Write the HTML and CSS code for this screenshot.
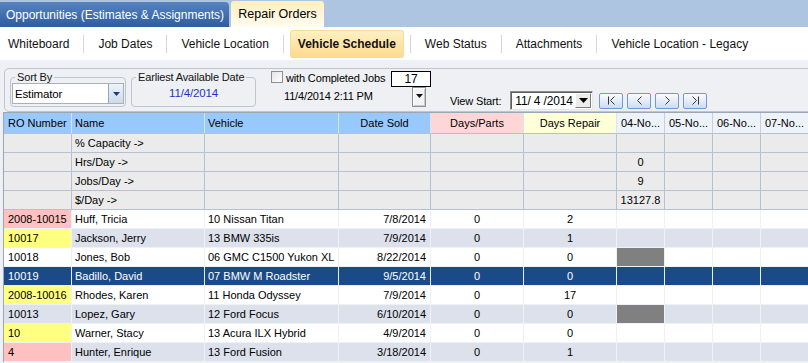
FILE: index.html
```html
<!DOCTYPE html>
<html lang="en">
<head>
  <meta charset="UTF-8">
  <title>Repair Orders - Vehicle Schedule</title>
  <link rel="stylesheet" href="styles.css">
</head>
<body>
  <header class="tabbar">
    <a class="tab tab-opps">Opportunities (Estimates &amp; Assignments)</a>
    <a class="tab tab-repair">Repair Orders</a>
  </header>

  <nav class="subnav">
    <a>Whiteboard</a><span class="sep"></span>
    <a>Job Dates</a><span class="sep"></span>
    <a>Vehicle Location</a><span class="sep"></span>
    <a class="active">Vehicle Schedule</a><span class="sep"></span>
    <a>Web Status</a><span class="sep"></span>
    <a>Attachments</a><span class="sep"></span>
    <a>Vehicle Location - Legacy</a>
  </nav>

  <section class="toolbar">
    <div class="toolbar-group">
      <fieldset class="box box-sort">
        <legend>Sort By</legend>
        <div class="combo">
          <span class="combo-text">Estimator</span>
          <span class="combo-btn">
            <svg width="7" height="4" viewBox="0 0 7 4"><path d="M0 0h7L3.5 4z" fill="#1f3f73"/></svg>
          </span>
        </div>
      </fieldset>

      <fieldset class="box box-earliest">
        <legend>Earliest Available Date</legend>
        <div class="earliest-date">11/4/2014</div>
      </fieldset>

      <div class="completed">
        <div class="completed-top">
          <span class="checkbox"></span>
          <span class="completed-label">with Completed Jobs</span>
          <span class="count-input">17</span>
        </div>
        <div class="completed-bottom">
          <span class="stamp">11/4/2014 2:11 PM</span>
          <span class="mini-drop">
            <svg width="7" height="4" viewBox="0 0 7 4"><path d="M0 0h7L3.5 4z" fill="#111"/></svg>
          </span>
        </div>
      </div>

      <div class="view-start">
        <span class="view-label">View Start:</span>
        <div class="date-picker">
          <span class="picker-text">11/ 4 /2014</span>
          <span class="picker-btn">
            <svg width="9" height="5" viewBox="0 0 9 5"><path d="M0 0h9L4.5 5z" fill="#000"/></svg>
          </span>
        </div>
        <div class="nav-buttons">
          <button class="nav-btn"><svg width="9" height="9" viewBox="0 0 9 9"><path d="M1.5 0.5v8M7.5 0.5L3.5 4.5L7.5 8.5" stroke="#333" fill="none"/></svg></button>
          <button class="nav-btn"><svg width="9" height="9" viewBox="0 0 9 9"><path d="M6.5 0.5L2.5 4.5L6.5 8.5" stroke="#333" fill="none"/></svg></button>
          <button class="nav-btn"><svg width="9" height="9" viewBox="0 0 9 9"><path d="M2.5 0.5L6.5 4.5L2.5 8.5" stroke="#333" fill="none"/></svg></button>
          <button class="nav-btn"><svg width="9" height="9" viewBox="0 0 9 9"><path d="M1.5 0.5L5.5 4.5L1.5 8.5M7.5 0.5v8" stroke="#333" fill="none"/></svg></button>
        </div>
      </div>
    </div>
  </section>

  <div class="grid">
    <div class="grid-row grid-head">
      <div class="cell">RO Number</div>
      <div class="cell">Name</div>
      <div class="cell">Vehicle</div>
      <div class="cell center">Date Sold</div>
      <div class="cell center head-parts">Days/Parts</div>
      <div class="cell center head-repair">Days Repair</div>
      <div class="cell center head-day">04-No...</div>
      <div class="cell center head-day">05-No...</div>
      <div class="cell center head-day">06-No...</div>
      <div class="cell center head-day">07-No...</div>
    </div>

    <div class="grid-row capacity">
      <div class="cell"></div><div class="cell">% Capacity -&gt;</div><div class="cell"></div><div class="cell"></div>
      <div class="cell"></div><div class="cell"></div><div class="cell center"></div><div class="cell"></div><div class="cell"></div><div class="cell"></div>
    </div>
    <div class="grid-row capacity">
      <div class="cell"></div><div class="cell">Hrs/Day -&gt;</div><div class="cell"></div><div class="cell"></div>
      <div class="cell"></div><div class="cell"></div><div class="cell center">0</div><div class="cell"></div><div class="cell"></div><div class="cell"></div>
    </div>
    <div class="grid-row capacity">
      <div class="cell"></div><div class="cell">Jobs/Day -&gt;</div><div class="cell"></div><div class="cell"></div>
      <div class="cell"></div><div class="cell"></div><div class="cell center">9</div><div class="cell"></div><div class="cell"></div><div class="cell"></div>
    </div>
    <div class="grid-row capacity">
      <div class="cell"></div><div class="cell">$/Day -&gt;</div><div class="cell"></div><div class="cell"></div>
      <div class="cell"></div><div class="cell"></div><div class="cell center">13127.8</div><div class="cell"></div><div class="cell"></div><div class="cell"></div>
    </div>

    <div class="grid-row job">
      <div class="cell ro-pink">2008-10015</div><div class="cell">Huff, Tricia</div><div class="cell">10 Nissan Titan</div><div class="cell right">7/8/2014</div>
      <div class="cell center">0</div><div class="cell center">2</div><div class="cell"></div><div class="cell"></div><div class="cell"></div><div class="cell"></div>
    </div>
    <div class="grid-row job alt">
      <div class="cell ro-yellow">10017</div><div class="cell">Jackson, Jerry</div><div class="cell">13 BMW 335is</div><div class="cell right">7/9/2014</div>
      <div class="cell center">0</div><div class="cell center">1</div><div class="cell"></div><div class="cell"></div><div class="cell"></div><div class="cell"></div>
    </div>
    <div class="grid-row job">
      <div class="cell">10018</div><div class="cell">Jones, Bob</div><div class="cell">06 GMC C1500 Yukon XL</div><div class="cell right">8/22/2014</div>
      <div class="cell center">0</div><div class="cell center">0</div><div class="cell booked"></div><div class="cell"></div><div class="cell"></div><div class="cell"></div>
    </div>
    <div class="grid-row job selected">
      <div class="cell">10019</div><div class="cell">Badillo, David</div><div class="cell">07 BMW M Roadster</div><div class="cell right">9/5/2014</div>
      <div class="cell center">0</div><div class="cell center">0</div><div class="cell"></div><div class="cell"></div><div class="cell"></div><div class="cell"></div>
    </div>
    <div class="grid-row job">
      <div class="cell ro-yellow">2008-10016</div><div class="cell">Rhodes, Karen</div><div class="cell">11 Honda Odyssey</div><div class="cell right">7/9/2014</div>
      <div class="cell center">0</div><div class="cell center">17</div><div class="cell"></div><div class="cell"></div><div class="cell"></div><div class="cell"></div>
    </div>
    <div class="grid-row job alt">
      <div class="cell">10013</div><div class="cell">Lopez, Gary</div><div class="cell">12 Ford Focus</div><div class="cell right">6/10/2014</div>
      <div class="cell center">0</div><div class="cell center">0</div><div class="cell booked"></div><div class="cell"></div><div class="cell"></div><div class="cell"></div>
    </div>
    <div class="grid-row job">
      <div class="cell ro-yellow">10</div><div class="cell">Warner, Stacy</div><div class="cell">13 Acura ILX Hybrid</div><div class="cell right">4/9/2014</div>
      <div class="cell center">0</div><div class="cell center">0</div><div class="cell"></div><div class="cell"></div><div class="cell"></div><div class="cell"></div>
    </div>
    <div class="grid-row job alt">
      <div class="cell ro-pink">4</div><div class="cell">Hunter, Enrique</div><div class="cell">13 Ford Fusion</div><div class="cell right">3/18/2014</div>
      <div class="cell center">0</div><div class="cell center">1</div><div class="cell"></div><div class="cell"></div><div class="cell"></div><div class="cell"></div>
    </div>
  </div>
</body>
</html>
```

FILE: styles.css
```css
body {
  margin: 0;
  width: 808px;
  height: 363px;
  overflow: hidden;
  font-family: 'Liberation Sans', Arial, sans-serif;
  font-size: 12px;
  color: #000;
  background-color: #eef0f4;
}

/* top tabs */
.tabbar {
  height: 27px;
  display: flex;
  align-items: flex-end;
  background-color: #adc5e0;
}

.tab {
  display: flex;
  align-items: center;
  box-sizing: border-box;
  font-size: 12px;
  text-decoration: none;
}

.tab-opps {
  width: 229px;
  height: 25px;
  padding-left: 6px;
  color: #fff;
  background: linear-gradient(#5784c0, #2e5c9d);
  border-top-right-radius: 4px;
}

.tab-repair {
  width: 93px;
  height: 26px;
  margin-left: 2px;
  justify-content: center;
  color: #000;
  font-size: 12.5px;
  background: linear-gradient(#ffefc0, #fffcf0);
  border-radius: 3px 3px 0 0;
}

/* sub navigation */
.subnav {
  height: 33px;
  display: flex;
  align-items: center;
  background-color: #fff;
}

.subnav a {
  padding: 0 8px;
  color: #111;
  text-decoration: none;
  line-height: 28px;
}

.subnav a.active {
  font-weight: bold;
  border-radius: 4px;
  background: linear-gradient(#fff1c6, #ffd98c);
  box-shadow: inset 0 0 0 1px #f6dc96;
}

.subnav .sep {
  width: 1px;
  height: 18px;
  margin: 0 6px;
  background-color: #d6d6d6;
}

/* toolbar */
.toolbar {
  height: 52px;
  box-sizing: border-box;
  padding: 6px 0 0 4px;
  background-color: #eef0f4;
  border-top: 2px solid #edf1f8;
  font-size: 11px;
  letter-spacing: -0.15px;
}

.toolbar-group {
  height: 44px;
  box-sizing: border-box;
  margin-right: -20px;
  padding-top: 2px;
  display: flex;
  align-items: flex-start;
  border: 1px solid #bcc5d2;
  border-radius: 5px;
}

.box {
  height: 36px;
  box-sizing: border-box;
  margin: 0 0 0 5px;
  padding: 0 1px 2px;
  min-width: 0;
  border: 1px solid #bcc5d2;
  border-radius: 4px;
}

.box legend {
  margin-left: 3px;
  padding: 0 2px;
  line-height: 12px;
  font-size: 11px;
  white-space: nowrap;
  color: #111;
}

.box-sort {
  width: 116px;
}

.box-earliest {
  width: 125px;
}

.combo {
  height: 21px;
  box-sizing: border-box;
  display: flex;
  align-items: center;
  justify-content: space-between;
  background-color: #fff;
  border: 1px solid #a7b0bd;
}

.combo-text {
  padding-left: 2px;
  font-size: 11.5px;
}

.combo-btn {
  width: 15px;
  height: 19px;
  box-sizing: border-box;
  display: flex;
  align-items: center;
  justify-content: center;
  border-left: 1px solid #8ea3c2;
  background: linear-gradient(#eef3fa, #cfdbea);
}

.earliest-date {
  padding-top: 4px;
  text-align: center;
  font-size: 11.5px;
  color: #1f33cc;
}

.completed {
  width: 160px;
  margin-left: 15px;
}

.completed-top {
  height: 16px;
  display: flex;
  align-items: center;
}

.checkbox {
  width: 12px;
  height: 12px;
  box-sizing: border-box;
  margin-top: -4px;
  border: 1px solid #8d8f91;
  background: linear-gradient(135deg, #e4e4e4, #fff);
}

.completed-label {
  width: 105px;
  padding-left: 3px;
  margin-top: -2px;
  white-space: nowrap;
}

.count-input {
  width: 40px;
  height: 16px;
  box-sizing: border-box;
  border: 1px solid #000;
  background-color: #fff;
  text-align: center;
  font-size: 12px;
  line-height: 14px;
}

.completed-bottom {
  height: 20px;
  display: flex;
  align-items: center;
  justify-content: space-between;
  padding: 0 5px 0 13px;
}

.stamp {
  margin-top: -2px;
}

.mini-drop {
  width: 14px;
  height: 20px;
  box-sizing: border-box;
  display: flex;
  justify-content: center;
  padding-top: 6px;
  border: 1px solid #8f8f8f;
  box-shadow: inset 1px 1px 0 #fff, inset -1px -1px 0 #c8c8c8;
  background-color: #f4f4f4;
}

.view-start {
  margin: 20px 0 0 19px;
  display: flex;
  align-items: center;
}

.date-picker {
  width: 83px;
  height: 19px;
  box-sizing: border-box;
  margin-left: 9px;
  display: flex;
  align-items: center;
  justify-content: space-between;
  background-color: #fff;
  border: 1px solid;
  border-color: #8a8a8a #e6e6e6 #e6e6e6 #8a8a8a;
  box-shadow: inset 1px 1px 0 #5f5f5f;
}

.picker-text {
  padding-left: 4px;
  font-size: 12px;
}

.picker-btn {
  width: 16px;
  height: 15px;
  box-sizing: border-box;
  margin-right: 1px;
  display: flex;
  align-items: center;
  justify-content: center;
  background-color: #ececec;
  border: 1px solid;
  border-color: #fff #7d7d7d #7d7d7d #fff;
}

.nav-buttons {
  display: flex;
  gap: 4px;
  margin-left: 6px;
}

.nav-btn {
  width: 24px;
  height: 16px;
  padding: 0;
  display: flex;
  align-items: center;
  justify-content: center;
  border: 1px solid #6d9ad8;
  border-radius: 2px;
  background: linear-gradient(#fbfcfe, #cddcf0);
}

/* schedule grid */
.grid {
  margin-left: 3px;
  border-left: 1px solid #9ba6b6;
  border-top: 1px solid #9ba6b6;
  font-size: 11px;
}

.grid-row {
  display: grid;
  grid-template-columns: 68px 133px 134px 92px 93px 93px 48px 48px 48px 48px;
  height: 19px;
}

.cell {
  box-sizing: border-box;
  padding: 0 3px;
  overflow: hidden;
  white-space: nowrap;
  line-height: 18px;
  border-right: 1px solid #eef1f6;
  border-bottom: 1px solid #eef1f6;
}

.cell:first-child {
  padding-left: 4px;
}

.center {
  text-align: center;
}

.right {
  text-align: right;
  padding-right: 4px;
}

.grid-head {
  height: 21px;
  background-color: #99c8fd;
}

.grid-head .cell {
  line-height: 20px;
  border-right-color: #d3e6fd;
  border-bottom-color: #b5c0d2;
}

.grid-head .head-parts {
  background-color: #ffd6d6;
}

.grid-head .head-repair {
  background-color: #ffffd8;
}

.grid-head .head-day {
  background-color: #eef3fa;
  border-right-color: #c6cfdc;
}

.capacity {
  background-color: #ebebeb;
}

.capacity .cell {
  border-color: #b5c0d2;
}

.job {
  background-color: #fff;
}

.job.alt {
  background-color: #dce1ec;
}

.job.selected {
  background-color: #1b4a88;
  color: #fff;
}

.job.selected .cell {
  border-color: #e9edf4;
}

.ro-pink {
  background-color: #ffc0c0;
}

.ro-yellow {
  background-color: #ffff80;
}

.booked {
  background-color: #808080;
}
```
